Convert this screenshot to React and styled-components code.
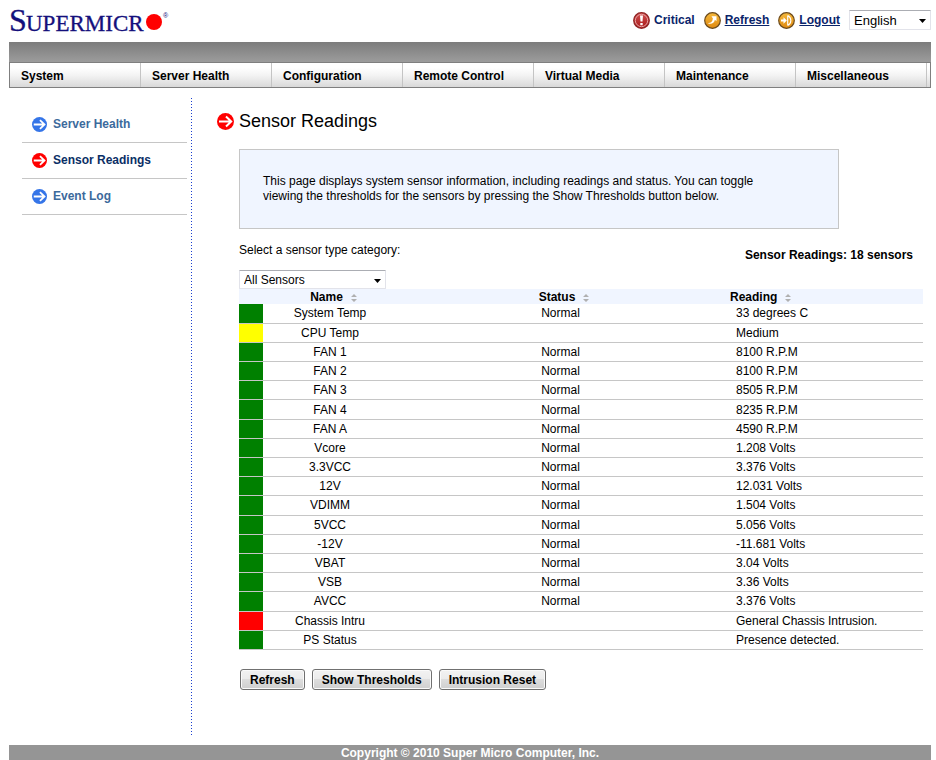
import React from 'react';
import styled, { createGlobalStyle } from 'styled-components';

const GlobalStyle = createGlobalStyle`
  * {
    box-sizing: border-box;
  }
  body {
    margin: 0;
    background-color: white;
    color: black;
    font-family: Arial, 'Liberation Sans', sans-serif;
    font-size: 12px;
    line-height: 15px;
  }
`;

const Page = styled.div`
  display: flex;
  flex-direction: column;
  min-height: 100vh;
  padding: 0 5px 0 9px;
`;

const Header = styled.header`
  display: flex;
  justify-content: space-between;
  align-items: flex-start;
  height: 42px;
`;

const Tools = styled.div`
  display: flex;
  align-items: center;
  gap: 9px;
  height: 40px;
`;

const Tool = styled.span`
  display: flex;
  align-items: center;
  gap: 4px;
  color: #0a246a;
  font-weight: bold;
`;

const ToolLink = styled.a`
  color: #0a246a;
`;

const SelectWrap = styled.span`
  position: relative;
  display: inline-flex;
`;

const Select = styled.select`
  appearance: none;
  width: ${({ $large }) => ($large ? '82px' : '147px')};
  height: ${({ $large }) => ($large ? '20px' : '19px')};
  padding: 0 16px 0 4px;
  border: 1px solid #e2e3ea;
  border-top-color: #abadb3;
  border-radius: 1px;
  background-color: white;
  color: black;
  font-family: inherit;
  font-size: ${({ $large }) => ($large ? '13px' : '12px')};
`;

const Arrow = styled.svg`
  position: absolute;
  right: 5px;
  top: 9px;
  pointer-events: none;
`;

const TopBar = styled.div`
  height: 20px;
  background: linear-gradient(#7c7c7c, #9c9c9c);
`;

const Nav = styled.nav`
  display: flex;
  height: 26px;
  padding-right: 3px;
  border: 1px solid #7f7f7f;
  background: linear-gradient(#ffffff 20%, #f4f4f4 50%, #d9d9d9);
`;

const NavLink = styled.a`
  flex: 1;
  padding: 1px 0 0 11px;
  border-right: 1px solid #c4c4c4;
  color: black;
  font-weight: bold;
  line-height: 24px;
  text-decoration: none;
`;

const Content = styled.div`
  display: flex;
  flex: 1;
  margin: 10px 0;
`;

const Sidebar = styled.aside`
  flex: none;
  width: 182px;
  padding: 9px 4px 0 13px;
`;

const SideLink = styled.a`
  display: flex;
  align-items: center;
  gap: 6px;
  height: 36px;
  padding-left: 10px;
  border-bottom: 1px solid #c6c6c6;
  color: ${({ $active }) => ($active ? '#0a2f66' : '#3c6a9c')};
  font-weight: bold;
  text-decoration: none;
`;

const Main = styled.main`
  flex: 1;
  min-width: 0;
  padding: 12px 8px 0 26px;
  background: repeating-linear-gradient(#1a3fd0 0 1px, transparent 1px 3px) left top / 1px 100% no-repeat;
`;

const Title = styled.h1`
  display: flex;
  align-items: center;
  gap: 5px;
  margin: 0 0 17px;
  font-size: 18px;
  font-weight: normal;
  line-height: 22px;
`;

const Body = styled.div`
  padding-left: 22px;
`;

const Info = styled.p`
  max-width: 600px;
  margin: 0;
  padding: 24px 48px 24px 23px;
  border: 1px solid #c6c6c6;
  background-color: #f0f5ff;
`;

const Filter = styled.div`
  display: flex;
  justify-content: space-between;
  align-items: flex-start;
  padding-top: 14px;
`;

const Field = styled.div`
  display: flex;
  flex-direction: column;
  align-items: flex-start;
  gap: 12px;
`;

const Count = styled.strong`
  padding: 5px 10px 0 0;
`;

const Table = styled.table`
  width: 100%;
  height: 361px;
  border-collapse: collapse;
  table-layout: fixed;
`;

const Col = styled.col`
  width: ${({ $width }) => $width || 'auto'};
`;

const HeadCell = styled.th`
  height: 15px;
  padding: 1px 0 0 ${({ $left }) => ($left ? '6px' : '7px')};
  background-color: #f0f5ff;
  line-height: 14px;
  text-align: ${({ $left }) => ($left ? 'left' : 'center')};
`;

const SortIcon = styled.svg`
  margin-left: 8px;
  vertical-align: -1px;
`;

const Row = styled.tr`
  border-bottom: 1px solid #c6c6c6;
`;

const Cell = styled.td`
  height: 19px;
  padding: 1px 0 0 ${({ $left }) => ($left ? '12px' : '0')};
  text-align: ${({ $left }) => ($left ? 'left' : 'center')};
`;

const Swatch = styled.td`
  padding: 0;
  background-color: ${({ $color }) => $color};
`;

const Actions = styled.div`
  display: flex;
  gap: 7px;
  padding: 19px 0 0 1px;
`;

const Button = styled.button`
  height: 21px;
  padding: 0 9px;
  border: 1px solid #707070;
  border-radius: 3px;
  background: linear-gradient(#f2f2f2, #ebebeb 50%, #dddddd 50%, #cfcfcf);
  box-shadow: inset 0 0 0 1px #fafafa;
  color: black;
  font-family: inherit;
  font-size: 12px;
  font-weight: bold;
`;

const Footer = styled.footer`
  padding-top: 1px;
  background-color: #959595;
  color: white;
  font-weight: bold;
  line-height: 14px;
  text-align: center;
`;

const menu = [
  'System',
  'Server Health',
  'Configuration',
  'Remote Control',
  'Virtual Media',
  'Maintenance',
  'Miscellaneous',
];

const sensors = [
  ['green', 'System Temp', 'Normal', '33 degrees C'],
  ['yellow', 'CPU Temp', '', 'Medium'],
  ['green', 'FAN 1', 'Normal', '8100 R.P.M'],
  ['green', 'FAN 2', 'Normal', '8100 R.P.M'],
  ['green', 'FAN 3', 'Normal', '8505 R.P.M'],
  ['green', 'FAN 4', 'Normal', '8235 R.P.M'],
  ['green', 'FAN A', 'Normal', '4590 R.P.M'],
  ['green', 'Vcore', 'Normal', '1.208 Volts'],
  ['green', '3.3VCC', 'Normal', '3.376 Volts'],
  ['green', '12V', 'Normal', '12.031 Volts'],
  ['green', 'VDIMM', 'Normal', '1.504 Volts'],
  ['green', '5VCC', 'Normal', '5.056 Volts'],
  ['green', '-12V', 'Normal', '-11.681 Volts'],
  ['green', 'VBAT', 'Normal', '3.04 Volts'],
  ['green', 'VSB', 'Normal', '3.36 Volts'],
  ['green', 'AVCC', 'Normal', '3.376 Volts'],
  ['red', 'Chassis Intru', '', 'General Chassis Intrusion.'],
  ['green', 'PS Status', '', 'Presence detected.'],
];

const Logo = () => (
  <svg width="164" height="42" viewBox="0 0 164 42" role="img" aria-label="Supermicro">
    <g fill="#14107c" stroke="#14107c" strokeWidth="0.3" fontFamily="'Liberation Serif', serif">
      <text x="0" y="31" fontSize="32">S</text>
      <text x="17" y="31" fontSize="23">UPERMICR</text>
    </g>
    <circle cx="145" cy="22" r="8" fill="#ff0000" />
    <text x="154" y="18" fontSize="7" fill="#14107c" fontFamily="'Liberation Sans', sans-serif">®</text>
  </svg>
);

const ArrowIcon = ({ size, color }) => (
  <svg width={size} height={size} viewBox="0 0 17 17" aria-hidden="true">
    <circle cx="8.5" cy="8.5" r="8.5" fill={color} />
    <path d="M2 8.5h12M9 3.5l5.2 5L9 13.5" fill="none" stroke="white" strokeWidth="2" />
  </svg>
);

const Badge = ({ id, rim, from, to, children }) => (
  <svg width="17" height="17" viewBox="0 0 17 17" aria-hidden="true">
    <defs>
      <linearGradient id={id} x1="0" y1="0" x2="0" y2="1">
        <stop offset="0" stopColor={from} />
        <stop offset="1" stopColor={to} />
      </linearGradient>
    </defs>
    <circle cx="8.5" cy="8.5" r="7.8" fill={`url(#${id})`} stroke={rim} strokeWidth="1.2" />
    {children}
  </svg>
);

const CriticalIcon = () => (
  <Badge id="critical" rim="#8f2424" from="#d05050" to="#a81818">
    <circle cx="8.5" cy="8.5" r="6.2" fill="none" stroke="#e6a0a0" strokeWidth="1" />
    <path d="M7 3.5h3l-.5 6h-2zM7.3 11h2.4v2.3H7.3z" fill="white" />
  </Badge>
);

const RefreshIcon = () => (
  <Badge id="refresh" rim="#6b4a1c" from="#f4b83c" to="#e08a10">
    <path d="M7.5 4.2h5v5l-1.6-1.5c-.6 3.6-4.3 5.4-7.2 3.2 2.7.4 4.8-1.2 5.2-4.5z" fill="white" />
  </Badge>
);

const LogoutIcon = () => (
  <Badge id="logout" rim="#6b4a1c" from="#f4b83c" to="#e08a10">
    <path d="M3 7.5h2.5V5.2l3.3 3.3-3.3 3.3V9.5H3z" fill="white" />
    <path d="M9.7 3.5v10M9.7 3.5c4.2 2.2 4.2 7.8 0 10" fill="none" stroke="white" strokeWidth="1.1" />
  </Badge>
);

const DropDown = ({ id, label, large, options }) => (
  <SelectWrap>
    <Select id={id} aria-label={label} $large={large}>
      {options.map(option => <option key={option}>{option}</option>)}
    </Select>
    <Arrow width="7" height="4" viewBox="0 0 7 4" aria-hidden="true">
      <path d="M0 0h7L3.5 4z" />
    </Arrow>
  </SelectWrap>
);

const Sort = () => (
  <SortIcon width="6" height="8" viewBox="0 0 6 8" aria-hidden="true">
    <path d="M3 0l3 3H0zM0 5h6L3 8z" fill="#b0b0b0" />
  </SortIcon>
);

const SensorTable = () => (
  <Table>
    <colgroup>
      <Col $width="24px" />
      <Col $width="134px" />
      <Col />
      <Col $width="199px" />
    </colgroup>
    <thead>
      <tr>
        <HeadCell />
        <HeadCell>Name<Sort /></HeadCell>
        <HeadCell>Status<Sort /></HeadCell>
        <HeadCell $left>Reading<Sort /></HeadCell>
      </tr>
    </thead>
    <tbody>
      {sensors.map(([color, name, status, reading]) => (
        <Row key={name}>
          <Swatch $color={color} />
          <Cell>{name}</Cell>
          <Cell>{status}</Cell>
          <Cell $left>{reading}</Cell>
        </Row>
      ))}
    </tbody>
  </Table>
);

const App = () => (
  <>
    <GlobalStyle />
    <Page>
      <Header>
        <Logo />
        <Tools>
          <Tool><CriticalIcon />Critical</Tool>
          <Tool><RefreshIcon /><ToolLink href="#refresh">Refresh</ToolLink></Tool>
          <Tool><LogoutIcon /><ToolLink href="#logout">Logout</ToolLink></Tool>
          <DropDown id="language" label="Language" large options={['English']} />
        </Tools>
      </Header>
      <TopBar />
      <Nav>
        {menu.map(item => <NavLink key={item} href="#menu">{item}</NavLink>)}
      </Nav>
      <Content>
        <Sidebar>
          <SideLink href="#health"><ArrowIcon size={15} color="#3575e8" />Server Health</SideLink>
          <SideLink href="#sensors" $active><ArrowIcon size={15} color="#ff0000" />Sensor Readings</SideLink>
          <SideLink href="#log"><ArrowIcon size={15} color="#3575e8" />Event Log</SideLink>
        </Sidebar>
        <Main>
          <Title><ArrowIcon size={17} color="#ff0000" />Sensor Readings</Title>
          <Body>
            <Info>
              This page displays system sensor information, including readings and status. You can toggle
              viewing the thresholds for the sensors by pressing the Show Thresholds button below.
            </Info>
            <Filter>
              <Field>
                <label htmlFor="category">Select a sensor type category:</label>
                <DropDown id="category" options={['All Sensors']} />
              </Field>
              <Count>Sensor Readings: 18 sensors</Count>
            </Filter>
            <SensorTable />
            <Actions>
              <Button type="button">Refresh</Button>
              <Button type="button">Show Thresholds</Button>
              <Button type="button">Intrusion Reset</Button>
            </Actions>
          </Body>
        </Main>
      </Content>
      <Footer>Copyright © 2010 Super Micro Computer, Inc.</Footer>
    </Page>
  </>
);

export default App;
